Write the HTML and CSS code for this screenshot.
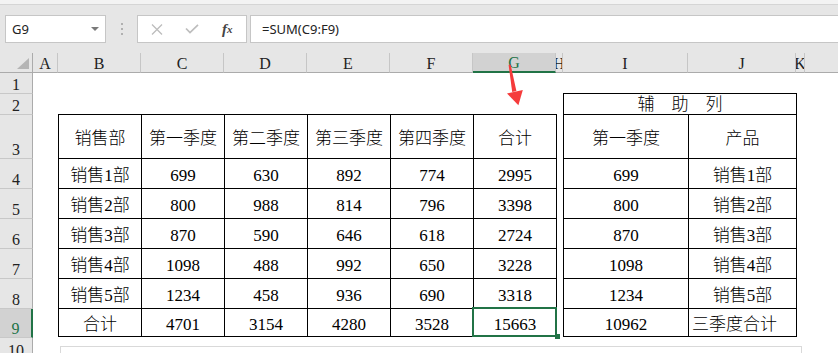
FILE: index.html
```html
<!DOCTYPE html>
<html lang="zh-CN">
<head>
    <meta charset="UTF-8">
    <title>SUM</title>
    <link rel="stylesheet" href="styles.css">
</head>
<body>
<div class="app">
    <div class="topstrip"></div>

    <div class="fbar">
        <div class="box namebox"><span>G9</span><i class="caret"></i></div>
        <div class="grip"><i></i><i></i><i></i></div>
        <div class="box fbtns">
            <span>
                <svg width="12" height="11" viewBox="0 0 12 11"><path d="M1 0.5 L11 10.5 M11 0.5 L1 10.5" stroke="#bdbdbd" stroke-width="1.3" fill="none"/></svg>
            </span>
            <span>
                <svg width="14" height="10" viewBox="0 0 14 10"><path d="M1 4.5 L5 8.5 L13 0.8" stroke="#bdbdbd" stroke-width="1.7" fill="none"/></svg>
            </span>
            <span class="fx">f<small>x</small></span>
        </div>
        <div class="box formula">=SUM(C9:F9)</div>
    </div>

    <div class="colhead">
        <div class="ch corner"><i></i></div>
        <div class="ch w-a">A</div>
        <div class="ch w-b">B</div>
        <div class="ch w-b">C</div>
        <div class="ch w-b">D</div>
        <div class="ch w-b">E</div>
        <div class="ch w-b">F</div>
        <div class="ch w-b on">G</div>
        <div class="ch w-h">H</div>
        <div class="ch w-i">I</div>
        <div class="ch w-j">J</div>
        <div class="ch w-k">K</div>
        <div class="ch rest"></div>
    </div>

    <div class="sheet">
        <div class="rowhead">
            <div class="rh" style="height:21px">1</div>
            <div class="rh" style="height:21px">2</div>
            <div class="rh" style="height:44px">3</div>
            <div class="rh" style="height:30px">4</div>
            <div class="rh" style="height:30px">5</div>
            <div class="rh" style="height:30px">6</div>
            <div class="rh" style="height:30px">7</div>
            <div class="rh" style="height:30px">8</div>
            <div class="rh on" style="height:29px">9</div>
            <div class="rh" style="height:22px">10</div>
        </div>

        <div class="cells">
            <div class="tbl main">
                <div>销售部</div><div>第一季度</div><div>第二季度</div><div>第三季度</div><div>第四季度</div><div>合计</div>
                <div>销售1部</div><div>699</div><div>630</div><div>892</div><div>774</div><div>2995</div>
                <div>销售2部</div><div>800</div><div>988</div><div>814</div><div>796</div><div>3398</div>
                <div>销售3部</div><div>870</div><div>590</div><div>646</div><div>618</div><div>2724</div>
                <div>销售4部</div><div>1098</div><div>488</div><div>992</div><div>650</div><div>3228</div>
                <div>销售5部</div><div>1234</div><div>458</div><div>936</div><div>690</div><div>3318</div>
                <div>合计</div><div>4701</div><div>3154</div><div>4280</div><div>3528</div><div class="sel">15663</div>
            </div>

            <div class="tbl aux">
                <div class="merged">辅　助　列</div>
                <div>第一季度</div><div>产品</div>
                <div>699</div><div>销售1部</div>
                <div>800</div><div>销售2部</div>
                <div>870</div><div>销售3部</div>
                <div>1098</div><div>销售4部</div>
                <div>1234</div><div>销售5部</div>
                <div>10962</div><div class="left">三季度合计</div>
            </div>

            <div class="shape"></div>
        </div>
    </div>

    <svg class="arrow" width="30" height="50" viewBox="0 0 30 50">
        <path d="M8.6 5 L10.6 4.6 L16.4 31 L12.2 32 Z" fill="#f53b3b"/>
        <path d="M7 33.4 L22.8 30 L18.4 45.2 Z" fill="#f53b3b"/>
    </svg>
</div>
</body>
</html>
```

FILE: styles.css
```css
body {
    margin:             0;
    background:         #fff;
}

.app {
    position:           relative;
    width:              838px;
    height:             353px;
    overflow:           hidden;
    font-family:        "Noto Sans", sans-serif;
}

/* formula bar */
.topstrip {
    height:             4px;
    background:         #f3f3f3;
    border-bottom:      1px solid #d5d5d5;
}

.fbar {
    display:            flex;
    height:             48px;
    box-sizing:         border-box;
    padding:            10px 0 0 5px;
    background:         #e6e6e6;
}

.box {
    height:             28px;
    box-sizing:         border-box;
    background:         #fff;
    border:             1px solid #c6c6c6;
}

.namebox {
    width:              101px;
    display:            flex;
    align-items:        center;
    justify-content:    space-between;
    padding:            0 6px;
    font-size:          13px;
    color:              #222;
}

.caret {
    width:              0;
    height:             0;
    border-left:        4px solid transparent;
    border-right:       4px solid transparent;
    border-top:         4px solid #7a7a7a;
}

.grip {
    width:              31px;
    height:             28px;
    display:            flex;
    flex-direction:     column;
    align-items:        center;
    justify-content:    center;
    gap:                3px;
}

.grip i {
    width:              2px;
    height:             2px;
    background:         #b0b0b0;
}

.fbtns {
    width:              110px;
    display:            flex;
    padding:            0 1px;
}

.fbtns span {
    width:              36px;
    display:            flex;
    align-items:        center;
    justify-content:    center;
}

.fx {
    font:               italic bold 15px "Liberation Serif", serif;
    color:              #444;
}

.fx small { font-size: 11px; }

.formula {
    flex:               1;
    margin:             0 -2px 0 3px;
    padding-left:       11px;
    font-size:          13px;
    line-height:        26px;
    color:              #222;
}

/* column headers */
.colhead {
    display:            flex;
    height:             20px;
    background:         #e6e6e6;
}

.ch {
    flex-shrink:        0;
    box-sizing:         border-box;
    height:             20px;
    overflow:           hidden;
    display:            flex;
    align-items:        center;
    justify-content:    center;
    padding-top:        2px;
    border-right:       1px solid #c6c6c6;
    border-bottom:      1px solid #ababab;
    font:               16px "Liberation Serif", serif;
    color:              #222;
}

.ch.on {
    background:         #d2d2d2;
    color:              #217346;
    border-bottom:      2px solid #217346;
}

.corner {
    width:              33px;
    align-items:        flex-end;
    justify-content:    flex-end;
    padding:            0 3px 3px 0;
    border-right-color: #ababab;
}

.corner i {
    width:              0;
    height:             0;
    border-left:        12px solid transparent;
    border-bottom:      11px solid #b5b5b5;
}

.w-a                    { width: 25px;  }
.w-b                    { width: 83px;  }
.w-h                    { width: 7px;   }
.w-i                    { width: 125px; }
.w-j                    { width: 108px; }
.w-k                    { width: 9px;   }
.ch.rest                { flex: 1; border-right: 0; }

/* rows */
.sheet {
    display:            flex;
}

.rowhead {
    width:              33px;
    flex-shrink:        0;
}

.rh {
    box-sizing:         border-box;
    display:            flex;
    align-items:        flex-end;
    justify-content:    center;
    background:         #e6e6e6;
    border-right:       1px solid #ababab;
    border-bottom:      1px solid #c8c8c8;
    font:               16px/1 "Liberation Serif", serif;
    color:              #222;
}

.rh.on {
    background:         #d2d2d2;
    color:              #217346;
    border-right:       2px solid #217346;
}

.cells {
    flex:               1;
    display:            grid;
    grid-template-columns: 25px 499px 6px 234px 1fr;
    grid-template-rows: 20px 21px auto 1fr;
}

/* tables */
.tbl {
    display:            grid;
    border-top:         1px solid #000;
    border-left:        1px solid #000;
    font:               300 17px/1 "Liberation Serif", "Noto Sans CJK SC", serif;
    color:              #000;
}

.tbl > div {
    box-sizing:         border-box;
    display:            flex;
    align-items:        center;
    justify-content:    center;
    padding-top:        3px;
    border-right:       1px solid #000;
    border-bottom:      1px solid #000;
    white-space:        nowrap;
}

.main {
    grid-column:        2;
    grid-row:           3;
    grid-template-columns: repeat(6, 83px);
    grid-template-rows: 44px repeat(5, 30px) 28px;
}

.aux {
    grid-column:        4;
    grid-row:           2 / span 2;
    grid-template-columns: 125px 108px;
    grid-template-rows: 21px 44px repeat(5, 30px) 28px;
}

.aux .merged {
    grid-column:        span 2;
    padding-top:        1px;
}

.tbl > .left {
    justify-content:    flex-start;
    padding-left:       3px;
}

.tbl > .sel {
    position:           relative;
    z-index:            1;
}

.sel::after {
    content:            "";
    position:           absolute;
    left:               -2px;
    top:                -2px;
    right:              -1px;
    bottom:             -1px;
    border:             2px solid #217346;
}

.sel::before {
    content:            "";
    position:           absolute;
    right:              -4px;
    bottom:             -3px;
    width:              5px;
    height:             5px;
    background:         #217346;
    z-index:            2;
}

.shape {
    grid-column:        1 / -1;
    grid-row:           4;
    margin:             9px 0 0 27px;
    width:              742px;
    height:             40px;
    box-sizing:         border-box;
    border:             1px solid #d9d9d9;
}

.arrow {
    position:           absolute;
    left:               500px;
    top:                60px;
}
```
